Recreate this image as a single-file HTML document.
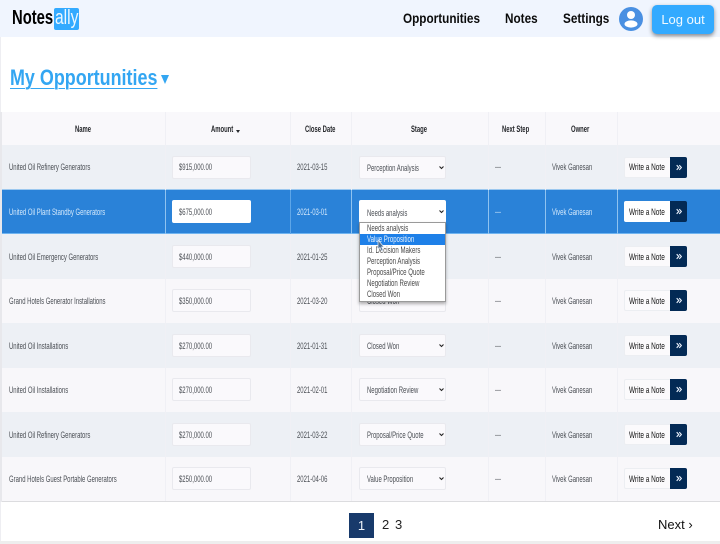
<!DOCTYPE html>
<html lang="en"><head><meta charset="utf-8"><title>Notesally</title>
<style>
*{box-sizing:border-box}
html{background:#fff}
html,body{margin:0;padding:0}
body{width:720px;height:544px;position:relative;overflow:hidden;background:#fff;font-family:"Liberation Sans",sans-serif;filter:blur(.3px)}
.a{position:absolute;white-space:nowrap}
.nav{left:0;top:0;width:720px;height:37px;background:#f0f5fe}
.logo{left:12px;top:7px;font-size:20px;font-weight:700;color:#000;transform:scaleX(.74);transform-origin:left top;line-height:23px}
.logob{left:54px;top:8px;width:25px;height:22px;background:#33aaff;border-radius:2px}
.logow{left:54.500px;top:7px;font-size:20px;color:#eef8ff;transform:scaleX(.78);transform-origin:left top;line-height:23px}
.nl{top:11px;font-size:13.500px;font-weight:700;color:#0b0b0b;line-height:16px;transform:scaleX(.87);transform-origin:left center}
.logout{left:652px;top:5px;width:62px;height:29px;background:#33aaff;border-radius:5px;color:#f2faff;font-size:13px;line-height:29px;text-align:center;box-shadow:0 2px 4px rgba(0,0,0,.45)}
h1{margin:0;left:10px;top:66px;font-size:22px;line-height:24px;font-weight:700;color:#33a6f2;text-decoration:underline;text-decoration-thickness:1px;text-underline-offset:3px;transform:scaleX(.815);transform-origin:left top}
.tri{left:161px;top:75px;width:0;height:0;border-left:4px solid transparent;border-right:4px solid transparent;border-top:9px solid #33a6f2}
.row{left:2px;width:718px}
.v{top:112px;width:1px;height:389px;background:#f0f0f5}
.t{margin-top:1px;font-size:9.500px;line-height:10px;color:#4b4f55;transform:scaleX(.626);transform-origin:left center}
.th{top:125px;font-size:9.500px;line-height:10px;font-weight:700;color:#25272b;transform:scaleX(.62);transform-origin:left center}
.box{left:172px;width:79px;height:23px;background:#faf9fc;border:1px solid #e9e9ee;border-radius:2px}
.sel{left:359px;width:87px;height:23px;background:#faf9fc;border:1px solid #e9e9ee;border-radius:2px}
.car{left:439px;width:5px;height:5px}
.wb{left:624px;width:47px;height:21px;background:#fbfafc;border:1px solid #eceef2;border-radius:2px 0 0 2px}
.wn{left:670px;width:17px;height:21px;background:#032a55;border-radius:0 2px 2px 0}
.wn svg{position:absolute;left:6px;top:7px}
.wt{margin-top:1px;left:629px;font-size:9.500px;line-height:10px;color:#111;transform:scaleX(.68);transform-origin:left center}
.w{color:#d3e8fb}
.dd{left:359px;top:222px;width:87px;height:80px;background:#fff;border:1px solid #9a9a9a;box-shadow:0 2px 3px rgba(0,0,0,.3)}
.o{margin-top:1px;left:367px;font-size:9.500px;line-height:10px;color:#4a4a4a;transform:scaleX(.64);transform-origin:left center}
</style></head><body>
<div class="a nav"></div>
<div class="a" style="left:0;top:37px;width:1px;height:507px;background:#eeeef2"></div>
<div class="a logob"></div>
<div class="a logo">Notes</div>
<div class="a logow">ally</div>
<div class="a nl" style="left:403px">Opportunities</div>
<div class="a nl" style="left:505px">Notes</div>
<div class="a nl" style="left:563px">Settings</div>
<svg class="a" style="left:619px;top:7px" width="24" height="24" viewBox="0 0 24 24"><circle cx="12" cy="12" r="12" fill="#4a90e2"/><circle cx="12" cy="8" r="4" fill="#fff"/><ellipse cx="12" cy="17" rx="6.500" ry="3.600" fill="#fff"/></svg>
<div class="a logout">Log out</div>
<h1 class="a">My Opportunities</h1>
<div class="a tri"></div>

<div class="a row" style="top:112px;height:33px;background:#f9f8fb"></div>
<div class="a row" style="top:145px;height:45px;background:#edf0f5"></div>
<div class="a row" style="top:189px;height:45px;background:#2a82d8;border-top:1px solid #9cc8ef;border-bottom:1px solid #6fb4f0"></div>
<div class="a row" style="top:234px;height:45px;background:#edf0f5"></div>
<div class="a row" style="top:279px;height:44px;background:#f8f7fa"></div>
<div class="a row" style="top:323px;height:45px;background:#edf0f5"></div>
<div class="a row" style="top:368px;height:44px;background:#f8f7fa"></div>
<div class="a row" style="top:412px;height:45px;background:#edf0f5"></div>
<div class="a row" style="top:457px;height:44px;background:#f8f7fa"></div>
<div class="a" style="left:2px;top:501px;width:718px;height:1px;background:#dcdcdf"></div>
<div class="a" style="left:0;top:112px;width:2px;height:390px;background:#e8e8ec"></div>
<div class="a" style="left:0;top:541px;width:720px;height:3px;background:#eeeeee"></div>

<div class="a v" style="left:165px"></div>
<div class="a v" style="left:290px"></div>
<div class="a v" style="left:351px"></div>
<div class="a v" style="left:488px"></div>
<div class="a v" style="left:545px"></div>
<div class="a v" style="left:617px"></div>
<div class="a" style="left:165px;top:190px;width:1px;height:44px;background:#8fc3f0"></div>
<div class="a" style="left:290px;top:190px;width:1px;height:44px;background:#5ea6e8"></div>
<div class="a" style="left:351px;top:190px;width:1px;height:44px;background:#8fc3f0"></div>
<div class="a" style="left:488px;top:190px;width:1px;height:44px;background:#8fc3f0"></div>
<div class="a" style="left:545px;top:190px;width:1px;height:44px;background:#8fc3f0"></div>
<div class="a" style="left:617px;top:190px;width:1px;height:44px;background:#8fc3f0"></div>

<div class="a th" style="left:75px">Name</div>
<div class="a th" style="left:211px">Amount</div>
<div class="a" style="left:236px;top:130px;width:0;height:0;border-left:2px solid transparent;border-right:2px solid transparent;border-top:3px solid #25272b"></div>
<div class="a th" style="left:305px">Close Date</div>
<div class="a th" style="left:411px">Stage</div>
<div class="a th" style="left:502px">Next Step</div>
<div class="a th" style="left:571px">Owner</div>

<!-- row 1 -->
<div class="a t" style="left:9px;top:162px">United Oil Refinery Generators</div>
<div class="a box" style="top:156px"></div><div class="a t" style="left:179px;top:162px">$915,000.00</div>
<div class="a t" style="left:297px;top:162px">2021-03-15</div>
<div class="a sel" style="top:156px"></div><div class="a t" style="left:367px;top:163px">Perception Analysis</div>
<svg class="a car" style="top:165px" viewBox="0 0 5 5"><path d="M.5 1.500 2.500 3.500 4.500 1.500" fill="none" stroke="#222" stroke-width="1.100"/></svg>
<div class="a t" style="left:495px;top:162px">---</div>
<div class="a t" style="left:552px;top:162px">Vivek Ganesan</div>
<div class="a wb" style="top:157px"></div><div class="a wn" style="top:157px"><svg width="6" height="7" viewBox="0 0 7 7"><path d="M.8.800 3.300 3.500.8 6.200M3.800.800 6.300 3.500 3.800 6.200" fill="none" stroke="#e9f0fa" stroke-width="1.300"/></svg></div><div class="a wt" style="top:162px">Write a Note</div>

<!-- row 2 -->
<div class="a t w" style="left:9px;top:207px">United Oil Plant Standby Generators</div>
<div class="a box" style="top:200px;background:#fff;border-color:#fff"></div><div class="a t" style="left:179px;top:207px">$675,000.00</div>
<div class="a t w" style="left:297px;top:207px">2021-03-01</div>
<div class="a sel" style="top:200px;background:#fff;border-color:#fff"></div><div class="a t" style="left:367px;top:208px">Needs analysis</div>
<svg class="a car" style="top:209px" viewBox="0 0 5 5"><path d="M.5 1.500 2.500 3.500 4.500 1.500" fill="none" stroke="#222" stroke-width="1.100"/></svg>
<div class="a t w" style="left:495px;top:207px">---</div>
<div class="a t w" style="left:552px;top:207px">Vivek Ganesan</div>
<div class="a wb" style="top:201px;background:#fff;border-color:#fff"></div><div class="a wn" style="top:201px"><svg width="6" height="7" viewBox="0 0 7 7"><path d="M.8.800 3.300 3.500.8 6.200M3.800.800 6.300 3.500 3.800 6.200" fill="none" stroke="#e9f0fa" stroke-width="1.300"/></svg></div><div class="a wt" style="top:207px">Write a Note</div>

<!-- row 3 -->
<div class="a t" style="left:9px;top:252px">United Oil Emergency Generators</div>
<div class="a box" style="top:245px"></div><div class="a t" style="left:179px;top:252px">$440,000.00</div>
<div class="a t" style="left:297px;top:252px">2021-01-25</div>
<div class="a t" style="left:495px;top:252px">---</div>
<div class="a t" style="left:552px;top:252px">Vivek Ganesan</div>
<div class="a wb" style="top:246px"></div><div class="a wn" style="top:246px"><svg width="6" height="7" viewBox="0 0 7 7"><path d="M.8.800 3.300 3.500.8 6.200M3.800.800 6.300 3.500 3.800 6.200" fill="none" stroke="#e9f0fa" stroke-width="1.300"/></svg></div><div class="a wt" style="top:252px">Write a Note</div>

<!-- row 4 -->
<div class="a t" style="left:9px;top:296px">Grand Hotels Generator Installations</div>
<div class="a box" style="top:289px"></div><div class="a t" style="left:179px;top:296px">$350,000.00</div>
<div class="a t" style="left:297px;top:296px">2021-03-20</div>
<div class="a sel" style="top:289px"></div><div class="a t" style="left:367px;top:296px">Closed Won</div>
<div class="a t" style="left:495px;top:296px">---</div>
<div class="a t" style="left:552px;top:296px">Vivek Ganesan</div>
<div class="a wb" style="top:290px"></div><div class="a wn" style="top:290px"><svg width="6" height="7" viewBox="0 0 7 7"><path d="M.8.800 3.300 3.500.8 6.200M3.800.800 6.300 3.500 3.800 6.200" fill="none" stroke="#e9f0fa" stroke-width="1.300"/></svg></div><div class="a wt" style="top:296px">Write a Note</div>

<!-- row 5 -->
<div class="a t" style="left:9px;top:341px">United Oil Installations</div>
<div class="a box" style="top:334px"></div><div class="a t" style="left:179px;top:341px">$270,000.00</div>
<div class="a t" style="left:297px;top:341px">2021-01-31</div>
<div class="a sel" style="top:334px"></div><div class="a t" style="left:367px;top:341px">Closed Won</div>
<svg class="a car" style="top:343px" viewBox="0 0 5 5"><path d="M.5 1.500 2.500 3.500 4.500 1.500" fill="none" stroke="#222" stroke-width="1.100"/></svg>
<div class="a t" style="left:495px;top:341px">---</div>
<div class="a t" style="left:552px;top:341px">Vivek Ganesan</div>
<div class="a wb" style="top:335px"></div><div class="a wn" style="top:335px"><svg width="6" height="7" viewBox="0 0 7 7"><path d="M.8.800 3.300 3.500.8 6.200M3.800.800 6.300 3.500 3.800 6.200" fill="none" stroke="#e9f0fa" stroke-width="1.300"/></svg></div><div class="a wt" style="top:341px">Write a Note</div>

<!-- row 6 -->
<div class="a t" style="left:9px;top:385px">United Oil Installations</div>
<div class="a box" style="top:378px"></div><div class="a t" style="left:179px;top:385px">$270,000.00</div>
<div class="a t" style="left:297px;top:385px">2021-02-01</div>
<div class="a sel" style="top:378px"></div><div class="a t" style="left:367px;top:385px">Negotiation Review</div>
<svg class="a car" style="top:387px" viewBox="0 0 5 5"><path d="M.5 1.500 2.500 3.500 4.500 1.500" fill="none" stroke="#222" stroke-width="1.100"/></svg>
<div class="a t" style="left:495px;top:385px">---</div>
<div class="a t" style="left:552px;top:385px">Vivek Ganesan</div>
<div class="a wb" style="top:379px"></div><div class="a wn" style="top:379px"><svg width="6" height="7" viewBox="0 0 7 7"><path d="M.8.800 3.300 3.500.8 6.200M3.800.800 6.300 3.500 3.800 6.200" fill="none" stroke="#e9f0fa" stroke-width="1.300"/></svg></div><div class="a wt" style="top:385px">Write a Note</div>

<!-- row 7 -->
<div class="a t" style="left:9px;top:430px">United Oil Refinery Generators</div>
<div class="a box" style="top:423px"></div><div class="a t" style="left:179px;top:430px">$270,000.00</div>
<div class="a t" style="left:297px;top:430px">2021-03-22</div>
<div class="a sel" style="top:423px"></div><div class="a t" style="left:367px;top:430px">Proposal/Price Quote</div>
<svg class="a car" style="top:432px" viewBox="0 0 5 5"><path d="M.5 1.500 2.500 3.500 4.500 1.500" fill="none" stroke="#222" stroke-width="1.100"/></svg>
<div class="a t" style="left:495px;top:430px">---</div>
<div class="a t" style="left:552px;top:430px">Vivek Ganesan</div>
<div class="a wb" style="top:424px"></div><div class="a wn" style="top:424px"><svg width="6" height="7" viewBox="0 0 7 7"><path d="M.8.800 3.300 3.500.8 6.200M3.800.800 6.300 3.500 3.800 6.200" fill="none" stroke="#e9f0fa" stroke-width="1.300"/></svg></div><div class="a wt" style="top:430px">Write a Note</div>

<!-- row 8 -->
<div class="a t" style="left:9px;top:474px">Grand Hotels Guest Portable Generators</div>
<div class="a box" style="top:467px"></div><div class="a t" style="left:179px;top:474px">$250,000.00</div>
<div class="a t" style="left:297px;top:474px">2021-04-06</div>
<div class="a sel" style="top:467px"></div><div class="a t" style="left:367px;top:474px">Value Proposition</div>
<svg class="a car" style="top:476px" viewBox="0 0 5 5"><path d="M.5 1.500 2.500 3.500 4.500 1.500" fill="none" stroke="#222" stroke-width="1.100"/></svg>
<div class="a t" style="left:495px;top:474px">---</div>
<div class="a t" style="left:552px;top:474px">Vivek Ganesan</div>
<div class="a wb" style="top:468px"></div><div class="a wn" style="top:468px"><svg width="6" height="7" viewBox="0 0 7 7"><path d="M.8.800 3.300 3.500.8 6.200M3.800.800 6.300 3.500 3.800 6.200" fill="none" stroke="#e9f0fa" stroke-width="1.300"/></svg></div><div class="a wt" style="top:474px">Write a Note</div>

<!-- dropdown -->
<div class="a dd"></div>
<div class="a" style="left:360px;top:234px;width:85px;height:11px;background:#1e80e8"></div>
<div class="a o" style="top:223px">Needs analysis</div>
<div class="a o" style="top:234px;color:#e4f0fc">Value Proposition</div>
<div class="a o" style="top:245px">Id. Decision Makers</div>
<div class="a o" style="top:256px">Perception Analysis</div>
<div class="a o" style="top:267px">Proposal/Price Quote</div>
<div class="a o" style="top:278px">Negotiation Review</div>
<div class="a o" style="top:289px">Closed Won</div>
<svg class="a" style="left:377px;top:239px" width="8" height="13" viewBox="0 0 8 13"><path d="M1 1V10L3 8.500 4.500 12 6 11.300 4.600 8H7Z" fill="#4a6d94" stroke="#e8eef5" stroke-width=".7"/></svg>

<!-- pagination -->
<div class="a" style="left:349px;top:513px;width:25px;height:25px;background:#183a6b;color:#eef3fa;font-size:13px;line-height:25px;text-align:center">1</div>
<div class="a" style="left:382px;top:517px;font-size:13px;line-height:16px;color:#222">2</div>
<div class="a" style="left:395px;top:517px;font-size:13px;line-height:16px;color:#222">3</div>
<div class="a" style="left:658px;top:517px;font-size:13px;line-height:16px;color:#111">Next ›</div>
</body></html>
